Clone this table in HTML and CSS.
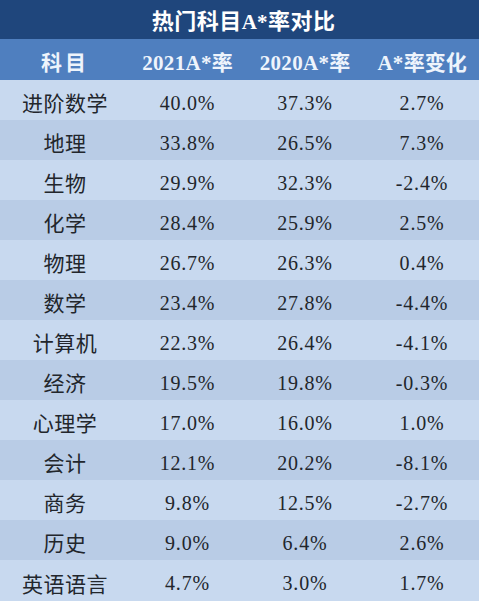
FILE: index.html
```html
<!DOCTYPE html>
<html lang="zh">
<head>
<meta charset="utf-8">
<title>热门科目A*率对比</title>
<link rel="stylesheet" href="styles.css">
</head>
<body>
<table class="grid">
  <colgroup>
    <col class="c1"><col class="c2"><col class="c3"><col class="c4">
  </colgroup>
  <thead>
    <tr class="title"><th colspan="4"><span class="cj">热门科目</span><span class="lat">A*</span><span class="cj">率对比</span></th></tr>
    <tr class="head">
      <th><span class="cj">科目</span></th>
      <th><span class="lat">2021A*</span><span class="cj">率</span></th>
      <th><span class="lat">2020A*</span><span class="cj">率</span></th>
      <th><span class="lat">A*</span><span class="cj">率变化</span></th>
    </tr>
  </thead>
  <tbody>
    <tr><td class="name">进阶数学</td><td>40.0%</td><td>37.3%</td><td>2.7%</td></tr>
    <tr><td class="name">地理</td><td>33.8%</td><td>26.5%</td><td>7.3%</td></tr>
    <tr><td class="name">生物</td><td>29.9%</td><td>32.3%</td><td>-2.4%</td></tr>
    <tr><td class="name">化学</td><td>28.4%</td><td>25.9%</td><td>2.5%</td></tr>
    <tr><td class="name">物理</td><td>26.7%</td><td>26.3%</td><td>0.4%</td></tr>
    <tr><td class="name">数学</td><td>23.4%</td><td>27.8%</td><td>-4.4%</td></tr>
    <tr><td class="name">计算机</td><td>22.3%</td><td>26.4%</td><td>-4.1%</td></tr>
    <tr><td class="name">经济</td><td>19.5%</td><td>19.8%</td><td>-0.3%</td></tr>
    <tr><td class="name">心理学</td><td>17.0%</td><td>16.0%</td><td>1.0%</td></tr>
    <tr><td class="name">会计</td><td>12.1%</td><td>20.2%</td><td>-8.1%</td></tr>
    <tr><td class="name">商务</td><td>9.8%</td><td>12.5%</td><td>-2.7%</td></tr>
    <tr><td class="name">历史</td><td>9.0%</td><td>6.4%</td><td>2.6%</td></tr>
    <tr><td class="name">英语语言</td><td>4.7%</td><td>3.0%</td><td>1.7%</td></tr>
  </tbody>
</table>
</body>
</html>
```

FILE: styles.css
```css
html, body {
  margin: 0;
  padding: 0;
  background: #ffffff;
}

.grid {
  width: 479px;
  border-collapse: collapse;
  table-layout: fixed;
  border-spacing: 0;
}

.c1 { width: 130px; }
.c2 { width: 115px; }
.c3 { width: 120px; }
.c4 { width: 114px; }

.grid th,
.grid td {
  padding: 0;
  text-align: center;
  vertical-align: middle;
}

.cj {
  font-family: "Noto Sans CJK SC", sans-serif;
  font-size: 21px;
}

.lat {
  font-family: "Liberation Serif", serif;
  font-size: 21px;
  letter-spacing: 0.3px;
}

.title th {
  height: 39px;
  background: #1f467c;
  color: #ffffff;
  font-weight: bold;
  padding-bottom: 1px;
  padding-left: 8px;
  box-sizing: border-box;
}

.title .cj { font-size: 22px; letter-spacing: 0.5px; }

.head th {
  height: 41px;
  background: #4f7fbf;
  color: #eef4fc;
  font-weight: bold;
  padding-top: 2px;
  box-sizing: border-box;
}

.head th:first-child .cj { letter-spacing: 3px; }

.grid td {
  height: 40px;
  box-sizing: border-box;
  padding-top: 6px;
  font-family: "Liberation Serif", serif;
  font-size: 20px;
  letter-spacing: 0.8px;
  color: #22262c;
}

.grid td.name {
  font-family: "Noto Sans CJK SC", sans-serif;
  font-size: 21px;
  letter-spacing: 0.5px;
  padding-top: 4px;
}

.grid tbody tr:nth-child(odd) td { background: #c8d9ef; }
.grid tbody tr:nth-child(even) td { background: #b9cce6; }
.grid tbody tr:last-child td { height: 41px; }
```
